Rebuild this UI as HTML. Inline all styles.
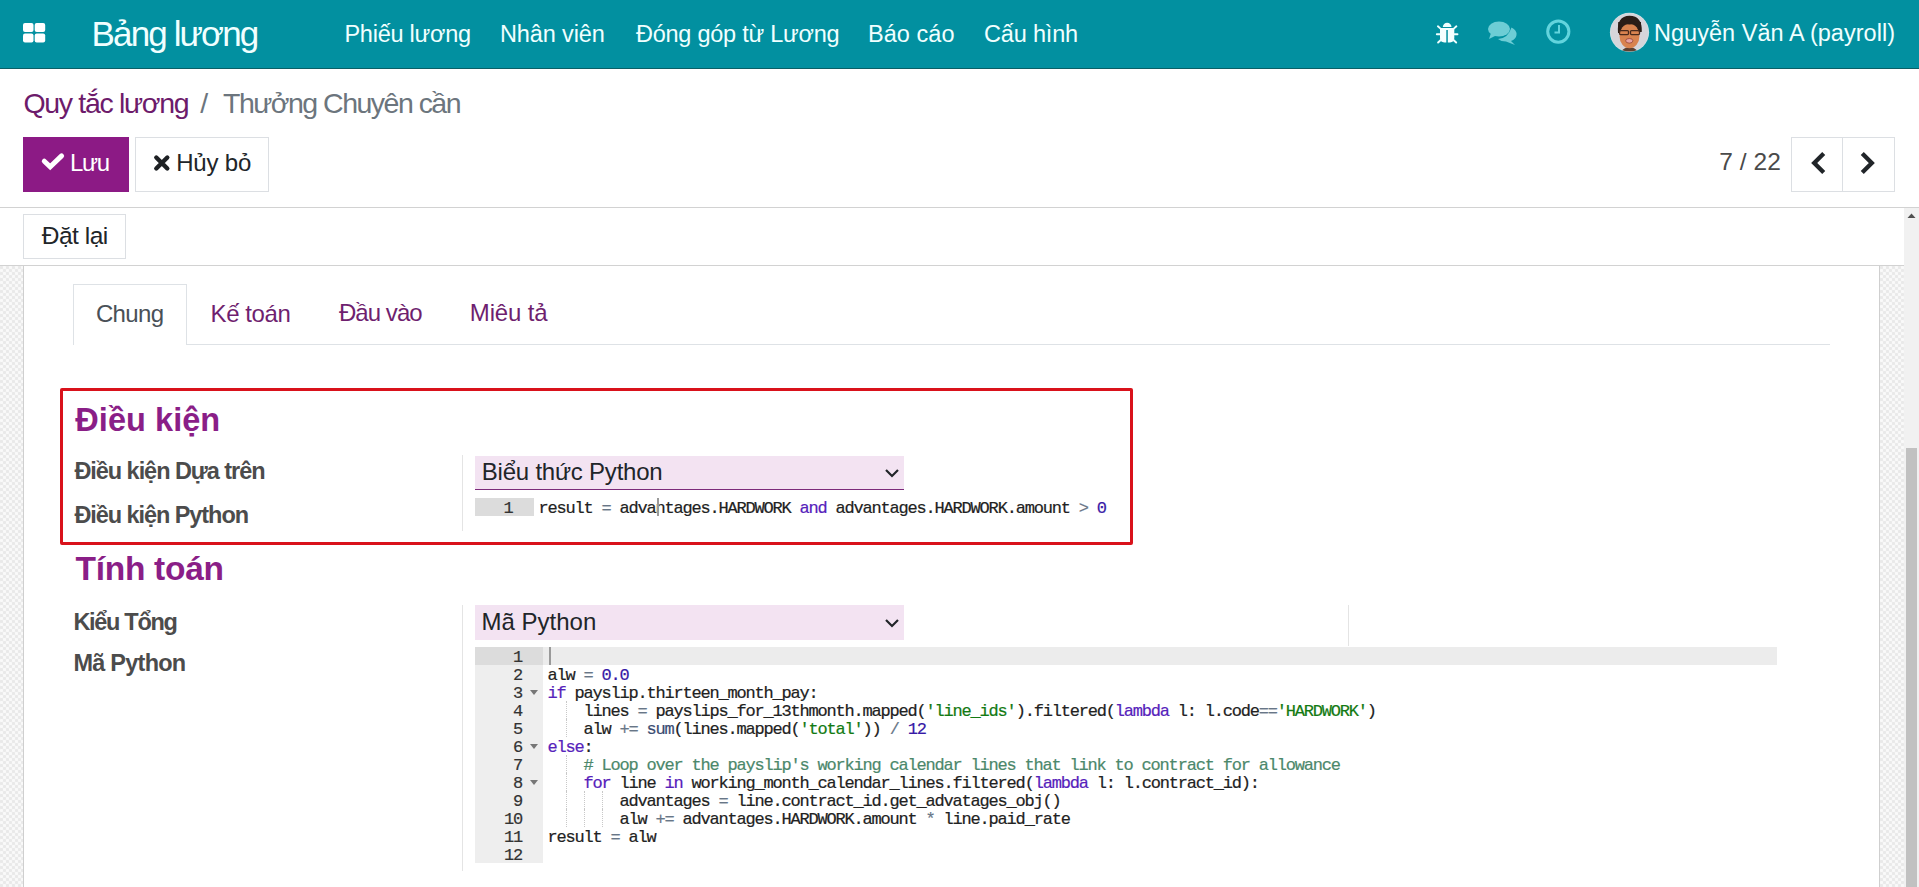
<!DOCTYPE html>
<html><head><meta charset="utf-8"><title>Odoo</title><style>
*{box-sizing:border-box}
html,body{margin:0;padding:0;width:1919px;height:887px;overflow:hidden;background:#fff;font-family:'Liberation Sans',sans-serif}
.t{position:absolute;white-space:nowrap;font-family:'Liberation Sans',sans-serif}
.ln{position:absolute;height:18px;line-height:18px;font-family:'Liberation Mono',monospace;font-size:17px;letter-spacing:-1.2px;color:#333;text-align:right;-webkit-text-stroke:0.2px #333}
.cl{position:absolute;height:18px;line-height:18px;font-family:'Liberation Mono',monospace;font-size:17px;letter-spacing:-1.2px;color:#222;white-space:pre;-webkit-text-stroke:0.2px currentColor}
.fold{position:absolute;width:0;height:0;border-left:4.5px solid transparent;border-right:4.5px solid transparent;border-top:5px solid #777}
.guide{position:absolute;width:0;border-left:1px dotted #c8c8c8}
.pat{background-color:#f1f1f1;background-image:radial-gradient(circle at 1.5px 1.5px,#e9e9e9 1.2px,transparent 1.8px),radial-gradient(circle at 4.5px 4.5px,#e9e9e9 1.2px,transparent 1.8px),radial-gradient(circle at 4.5px 1.5px,#f9f9f9 1.2px,transparent 1.8px),radial-gradient(circle at 1.5px 4.5px,#f9f9f9 1.2px,transparent 1.8px);background-size:6px 6px}
</style></head>
<body>
<div style="position:absolute;left:0;top:0;width:1919px;height:69px;background:#0290a0;border-bottom:1px solid #0a5f66"></div>
<div style="position:absolute;left:0;top:207px;width:1919px;height:1px;background:#d2d2d2"></div>
<div style="position:absolute;left:23px;top:137px;width:106px;height:55px;background:#8c1a85"></div>
<div style="position:absolute;left:135px;top:137px;width:134px;height:55px;border:1px solid #dcdfe3"></div>
<div style="position:absolute;left:1791px;top:137px;width:104px;height:55px;border:1px solid #dcdfe3"></div>
<div style="position:absolute;left:1842px;top:137px;width:1px;height:55px;background:#dcdfe3"></div>
<div style="position:absolute;left:23px;top:214px;width:103px;height:45px;border:1px solid #dcdfe3"></div>
<div style="position:absolute;left:0;top:265px;width:1904px;height:1px;background:#d2d2d2"></div>
<div class="pat" style="position:absolute;left:0;top:266px;width:23px;height:621px"></div>
<div class="pat" style="position:absolute;left:1880px;top:266px;width:24px;height:621px"></div>
<div style="position:absolute;left:23px;top:266px;width:1px;height:621px;background:#cfcfcf"></div>
<div style="position:absolute;left:1879px;top:266px;width:1px;height:621px;background:#cfcfcf"></div>
<div style="position:absolute;left:1904px;top:208px;width:15px;height:679px;background:#f1f1f1"></div>
<div style="position:absolute;left:1906px;top:448px;width:11px;height:439px;background:#c1c1c1"></div>
<div style="position:absolute;left:73px;top:344px;width:1757px;height:1px;background:#dee2e6"></div>
<div style="position:absolute;left:73px;top:284px;width:114px;height:61px;border:1px solid #dee2e6;border-bottom:none;background:#fff"></div>
<div style="position:absolute;left:60px;top:388px;width:1073px;height:157px;border:3px solid #d9121b;border-radius:2px"></div>
<div style="position:absolute;left:462px;top:455px;width:1px;height:76px;background:#e4e4e4"></div>
<div style="position:absolute;left:462px;top:605px;width:1px;height:266px;background:#e4e4e4"></div>
<div style="position:absolute;left:1348px;top:605px;width:1px;height:41px;background:#e4e4e4"></div>
<div style="position:absolute;left:475px;top:456px;width:429px;height:34px;background:#f3e3f2;border-bottom:1px solid #7c2a7a"></div>
<div style="position:absolute;left:475px;top:605px;width:429px;height:35px;background:#f3e3f2"></div>
<svg style="position:absolute;left:22px;top:22px" width="25" height="22" viewBox="0 0 25 22"><g fill="#fff"><rect x="1" y="1" width="10.5" height="9" rx="2"/><rect x="12.7" y="1" width="10.5" height="9" rx="2"/><rect x="1" y="11.5" width="10.5" height="9" rx="2"/><rect x="12.7" y="11.5" width="10.5" height="9" rx="2"/></g></svg>
<svg style="position:absolute;left:1430px;top:15px" width="35" height="35" viewBox="0 0 35 35">
<path d="M12.8 12 A4.35 4.35 0 0 1 21.5 12 Z" fill="#effefe"/>
<path d="M10 12.9 H24.3 V23 Q24.3 27.2 20 27.4 H14.3 Q10 27.2 10 23 Z" fill="#f4ffff"/>
<g stroke="#effefe" stroke-width="1.9" stroke-linecap="round" fill="none"><path d="M10.5 13.6 L7.9 11.3"/><path d="M23.8 13.6 L26.4 11.3"/><path d="M10 19.2 H6.8"/><path d="M24.3 19.2 H27.5"/><path d="M10.8 25 L8.1 27.5"/><path d="M23.5 25 L26.2 27.5"/></g>
<rect x="16.3" y="15" width="1.5" height="13" fill="#0290a0"/>
</svg>
<svg style="position:absolute;left:1487px;top:20px" width="31" height="26" viewBox="0 0 31 26"><g fill="#6dcdd5">
<ellipse cx="12" cy="9" rx="11" ry="7.5"/><path d="M4 13 L2 19 L10 15 Z"/>
<path d="M24.5 7.5 Q30 10 29.5 15 Q29 19 24 21 L28 25 L19 21.5 Q14 21.5 11 19 Q21 18.5 24.5 7.5 Z"/>
</g></svg>
<svg style="position:absolute;left:1545px;top:19px" width="27" height="26" viewBox="0 0 27 26"><g fill="none" stroke="#62d4dd" stroke-width="3"><circle cx="13.3" cy="12.6" r="10.6"/></g><path d="M14 6 V13.5 H9.5" fill="none" stroke="#62d4dd" stroke-width="2"/></svg>
<svg style="position:absolute;left:1605px;top:8px" width="50" height="50" viewBox="0 0 50 50">
<defs><clipPath id="cp"><circle cx="24.5" cy="24.3" r="19.3"/></clipPath></defs>
<circle cx="24.5" cy="24.3" r="19.6" fill="#c9e6e9"/>
<circle cx="24.5" cy="24.3" r="19" fill="#d6d5da"/>
<g clip-path="url(#cp)">
<path d="M16 46 Q17 39 24.5 39.5 Q32 39 33 46 Z" fill="#5d4030"/>
<path d="M13.2 25 V14 H36 V24 Z" fill="#2b1d17"/><ellipse cx="24.5" cy="28" rx="10" ry="12.2" fill="#d9834f"/>
<path d="M13 25 Q11.5 8 24.5 7.8 Q37.5 8 36.8 24 L35 23.5 Q35 17 30 15.8 Q24.5 17 19 15.8 Q14 17 14.5 25 Z" fill="#2b1d17"/>
<rect x="14.5" y="22.6" width="9" height="4" rx="1" fill="none" stroke="#4a2a1c" stroke-width="1.3"/>
<rect x="25.5" y="22.6" width="9" height="4" rx="1" fill="none" stroke="#4a2a1c" stroke-width="1.3"/>
<ellipse cx="24.3" cy="32.8" rx="3.6" ry="2.3" fill="#e9a2a0" stroke="#8a3a2a" stroke-width="0.7"/>
</g></svg>
<svg style="position:absolute;left:38px;top:148px" width="30" height="30" viewBox="0 0 30 30"><path d="M6.3 13.2 L12.2 18.8 L23.6 7.9" fill="none" stroke="#fff" stroke-width="5" stroke-linecap="round" stroke-linejoin="miter"/></svg>
<svg style="position:absolute;left:148px;top:148px" width="30" height="30" viewBox="0 0 30 30"><path d="M8.3 9.5 L19.3 20.5 M19.3 9.5 L8.3 20.5" fill="none" stroke="#1e2124" stroke-width="4.4" stroke-linecap="round"/></svg>
<svg style="position:absolute;left:1809px;top:151px" width="17" height="24" viewBox="0 0 17 24"><path d="M13.2 4 L5.2 12 L13.2 20" fill="none" stroke="#212529" stroke-width="4.3" stroke-linecap="square" stroke-linejoin="miter"/></svg>
<svg style="position:absolute;left:1860px;top:151px" width="17" height="24" viewBox="0 0 17 24"><path d="M3.8 4 L11.8 12 L3.8 20" fill="none" stroke="#212529" stroke-width="4.3" stroke-linecap="square" stroke-linejoin="miter"/></svg>
<svg style="position:absolute;left:883px;top:467px" width="18" height="12" viewBox="0 0 18 12"><path d="M3 3 L9 9 L15 3" fill="none" stroke="#212529" stroke-width="2.2"/></svg>
<svg style="position:absolute;left:883px;top:617px" width="18" height="12" viewBox="0 0 18 12"><path d="M3 3 L9 9 L15 3" fill="none" stroke="#212529" stroke-width="2.2"/></svg>
<svg style="position:absolute;left:1906px;top:212px" width="11" height="7" viewBox="0 0 11 7"><path d="M1.5 6 L5.5 1.5 L9.5 6 Z" fill="#505050"/></svg>
<div class="t" style="left:91.6px;top:-1.0px;font-size:35.0px;line-height:70px;font-weight:400;color:#f0ffff;letter-spacing:-1.878px">Bảng lương</div>
<div class="t" style="left:344.4px;top:10.7px;font-size:23.5px;line-height:47px;font-weight:400;color:#f0ffff;letter-spacing:-0.24px">Phiếu lương</div>
<div class="t" style="left:500.0px;top:10.7px;font-size:23.5px;line-height:47px;font-weight:400;color:#f0ffff;letter-spacing:-0.125px">Nhân viên</div>
<div class="t" style="left:636.0px;top:10.7px;font-size:23.5px;line-height:47px;font-weight:400;color:#f0ffff;letter-spacing:-0.25px">Đóng góp từ Lương</div>
<div class="t" style="left:868.0px;top:10.7px;font-size:23.5px;line-height:47px;font-weight:400;color:#f0ffff;letter-spacing:0.05px">Báo cáo</div>
<div class="t" style="left:984.0px;top:10.7px;font-size:23.5px;line-height:47px;font-weight:400;color:#f0ffff;letter-spacing:-0.171px">Cấu hình</div>
<div class="t" style="left:1654.0px;top:10.3px;font-size:23.5px;line-height:47px;font-weight:400;color:#f0ffff;letter-spacing:0.033px">Nguyễn Văn A (payroll)</div>
<div class="t" style="left:23.4px;top:75.0px;font-size:28.5px;line-height:57px;font-weight:400;color:#6d1b6b;letter-spacing:-1.308px">Quy tắc lương</div>
<div class="t" style="left:200.3px;top:74.5px;font-size:28.5px;line-height:57px;font-weight:400;color:#6c757d;letter-spacing:0px">/</div>
<div class="t" style="left:223.0px;top:74.5px;font-size:28.5px;line-height:57px;font-weight:400;color:#6c757d;letter-spacing:-1.512px">Thưởng Chuyên cần</div>
<div class="t" style="left:70.0px;top:138.8px;font-size:24.0px;line-height:48px;font-weight:400;color:#ffffff;letter-spacing:-1.35px">Lưu</div>
<div class="t" style="left:176.2px;top:138.8px;font-size:24.0px;line-height:48px;font-weight:400;color:#212529;letter-spacing:-0.18px">Hủy bỏ</div>
<div class="t" style="left:1719.3px;top:137.0px;font-size:24.5px;line-height:49px;font-weight:400;color:#4a4a4a;letter-spacing:0.04px">7 / 22</div>
<div class="t" style="left:41.7px;top:210.8px;font-size:24.5px;line-height:49px;font-weight:400;color:#212529;letter-spacing:-0.483px">Đặt lại</div>
<div class="t" style="left:95.9px;top:289.6px;font-size:24.0px;line-height:48px;font-weight:400;color:#495057;letter-spacing:-0.65px">Chung</div>
<div class="t" style="left:210.6px;top:289.6px;font-size:24.0px;line-height:48px;font-weight:400;color:#6f1f6f;letter-spacing:-0.433px">Kế toán</div>
<div class="t" style="left:338.9px;top:289.3px;font-size:24.0px;line-height:48px;font-weight:400;color:#6f1f6f;letter-spacing:-0.933px">Đầu vào</div>
<div class="t" style="left:469.8px;top:289.3px;font-size:24.0px;line-height:48px;font-weight:400;color:#6f1f6f;letter-spacing:-0.133px">Miêu tả</div>
<div class="t" style="left:75.3px;top:387.5px;font-size:32.5px;line-height:65px;font-weight:700;color:#8a1e87;letter-spacing:0.05px">Điều kiện</div>
<div class="t" style="left:74.4px;top:448.2px;font-size:23.5px;line-height:47px;font-weight:700;color:#4c4c4c;letter-spacing:-1.047px">Điều kiện Dựa trên</div>
<div class="t" style="left:74.4px;top:491.5px;font-size:23.5px;line-height:47px;font-weight:700;color:#4c4c4c;letter-spacing:-1.067px">Điều kiện Python</div>
<div class="t" style="left:481.8px;top:448.0px;font-size:24.0px;line-height:48px;font-weight:400;color:#212529;letter-spacing:-0.217px">Biểu thức Python</div>
<div class="t" style="left:75.5px;top:535.0px;font-size:33.5px;line-height:67px;font-weight:700;color:#8a1e87;letter-spacing:-0.281px">Tính toán</div>
<div class="t" style="left:73.4px;top:598.6px;font-size:23.5px;line-height:47px;font-weight:700;color:#4c4c4c;letter-spacing:-1.3px">Kiểu Tổng</div>
<div class="t" style="left:73.4px;top:640.0px;font-size:23.5px;line-height:47px;font-weight:700;color:#4c4c4c;letter-spacing:-0.75px">Mã Python</div>
<div class="t" style="left:481.4px;top:597.9px;font-size:24.0px;line-height:48px;font-weight:400;color:#212529;letter-spacing:0.025px">Mã Python</div>
<div style="position:absolute;left:475px;top:498px;width:59px;height:18px;background:#dcdcdc"></div>
<div class="ln" style="top:499.8px;left:475px;width:37.5px">1</div>
<div class="cl" style="top:499.8px;left:538.5px">result <span style="color:#687687">=</span> advantages.HARDWORK <span style="color:#5622bb">and</span> advantages.HARDWORK.amount <span style="color:#687687">&gt;</span> <span style="color:#3719a6">0</span></div>
<div style="position:absolute;left:657px;top:498px;width:2px;height:18px;background:#9a9a9a"></div>
<div style="position:absolute;left:475px;top:647.0px;width:68px;height:216.00px;background:#eeeeee"></div>
<div style="position:absolute;left:475px;top:647.0px;width:68px;height:18.00px;background:#dcdcdc"></div>
<div style="position:absolute;left:543px;top:647.0px;width:1234px;height:18.00px;background:#ececec"></div>
<div style="position:absolute;left:549px;top:647.0px;width:2px;height:18.00px;background:#9a9a9a"></div>
<div class="ln" style="top:648.80px;left:475px;width:47px">1</div>
<div class="ln" style="top:666.80px;left:475px;width:47px">2</div>
<div class="cl" style="top:666.80px;left:547.5px">alw <span style="color:#687687">=</span> <span style="color:#3719a6">0.0</span></div>
<div class="ln" style="top:684.80px;left:475px;width:47px">3</div>
<div class="fold" style="left:530px;top:690.00px"></div>
<div class="cl" style="top:684.80px;left:547.5px"><span style="color:#5622bb">if</span> payslip.thirteen_month_pay:</div>
<div class="ln" style="top:702.80px;left:475px;width:47px">4</div>
<div class="cl" style="top:702.80px;left:547.5px">    lines <span style="color:#687687">=</span> payslips_for_13thmonth.mapped(<span style="color:#137a13">&#x27;line_ids&#x27;</span>).filtered(<span style="color:#5622bb">lambda</span> l: l.code<span style="color:#687687">==</span><span style="color:#137a13">&#x27;HARDWORK&#x27;</span>)</div>
<div class="ln" style="top:720.80px;left:475px;width:47px">5</div>
<div class="cl" style="top:720.80px;left:547.5px">    alw <span style="color:#687687">+=</span> <span style="color:#3c4c72">sum</span>(lines.mapped(<span style="color:#137a13">&#x27;total&#x27;</span>)) <span style="color:#687687">/</span> <span style="color:#3719a6">12</span></div>
<div class="ln" style="top:738.80px;left:475px;width:47px">6</div>
<div class="fold" style="left:530px;top:744.00px"></div>
<div class="cl" style="top:738.80px;left:547.5px"><span style="color:#5622bb">else</span>:</div>
<div class="ln" style="top:756.80px;left:475px;width:47px">7</div>
<div class="cl" style="top:756.80px;left:547.5px">    <span style="color:#4c886b"># Loop over the payslip&#x27;s working calendar lines that link to contract for allowance</span></div>
<div class="ln" style="top:774.80px;left:475px;width:47px">8</div>
<div class="fold" style="left:530px;top:780.00px"></div>
<div class="cl" style="top:774.80px;left:547.5px">    <span style="color:#5622bb">for</span> line <span style="color:#5622bb">in</span> working_month_calendar_lines.filtered(<span style="color:#5622bb">lambda</span> l: l.contract_id):</div>
<div class="ln" style="top:792.80px;left:475px;width:47px">9</div>
<div class="cl" style="top:792.80px;left:547.5px">        advantages <span style="color:#687687">=</span> line.contract_id.get_advatages_obj()</div>
<div class="ln" style="top:810.80px;left:475px;width:47px">10</div>
<div class="cl" style="top:810.80px;left:547.5px">        alw <span style="color:#687687">+=</span> advantages.HARDWORK.amount <span style="color:#687687">*</span> line.paid_rate</div>
<div class="ln" style="top:828.80px;left:475px;width:47px">11</div>
<div class="cl" style="top:828.80px;left:547.5px">result <span style="color:#687687">=</span> alw</div>
<div class="ln" style="top:846.80px;left:475px;width:47px">12</div>
<div class="guide" style="left:566px;top:701.00px;height:18.00px"></div>
<div class="guide" style="left:566px;top:719.00px;height:18.00px"></div>
<div class="guide" style="left:566px;top:755.00px;height:18.00px"></div>
<div class="guide" style="left:566px;top:773.00px;height:18.00px"></div>
<div class="guide" style="left:566px;top:791.00px;height:18.00px"></div>
<div class="guide" style="left:566px;top:809.00px;height:18.00px"></div>
<div class="guide" style="left:584px;top:791.00px;height:18.00px"></div>
<div class="guide" style="left:602px;top:791.00px;height:18.00px"></div>
<div class="guide" style="left:584px;top:809.00px;height:18.00px"></div>
<div class="guide" style="left:602px;top:809.00px;height:18.00px"></div>
</body></html>
